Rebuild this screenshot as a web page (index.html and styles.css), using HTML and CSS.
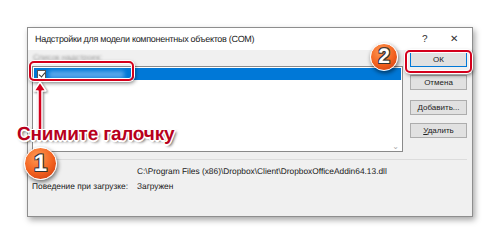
FILE: index.html
```html
<!DOCTYPE html>
<html lang="ru">
<head>
  <meta charset="UTF-8" />
  <title>Надстройки COM</title>
  <link rel="stylesheet" href="styles.css">
</head>
<body>
  <div class="stage">
    <!-- Окно -->
    <div class="dialog">
      <div class="titlebar">
        <span class="title">Надстройки для модели компонентных объектов (COM)</span>
        <span class="help">?</span>
        <span class="close">&#x2715;</span>
      </div>
      <div class="main">
        <div class="list-area">
          <div class="list-label">Список надстроек:</div>
          <div class="listbox">
            <div class="row selected">
              <span class="check"></span>
              <span class="blur-name"></span>
            </div>
            <span class="scroll-arrow">&#x2304;</span>
          </div>
        </div>
        <div class="buttons">
          <button class="btn default">ОК</button>
          <button class="btn">Отмена</button>
          <button class="btn gap"><u>Д</u>обавить...</button>
          <button class="btn"><u>У</u>далить</button>
        </div>
      </div>
      <div class="separator"></div>
      <div class="details">
        <div class="detail-row"><span class="key"></span><span>C:\Program Files (x86)\Dropbox\Client\DropboxOfficeAddin64.13.dll</span></div>
        <div class="detail-row"><span class="key">Поведение при загрузке:</span><span>Загружен</span></div>
      </div>
    </div>

    <!-- Пометки -->
    <div class="frame frame-row"></div>
    <div class="frame frame-ok"></div>
    <svg class="arrow" width="20" height="52" viewBox="0 0 20 52">
      <path d="M10 2 L16 11 L12 11 L12 50 L8 50 L8 11 L4 11 Z" fill="#d4001c" stroke="#fff" stroke-width="1.5" stroke-linejoin="round"/>
    </svg>
    <div class="caption">Снимите галочку</div>
    <div class="badge badge-1">1</div>
    <div class="badge badge-2">2</div>
  </div>
</body>
</html>
```

FILE: styles.css
```css
* { box-sizing: border-box; }
body {
  margin: 0;
  background: #fff;
  font-family: "Liberation Sans", Arial, sans-serif;
  text-rendering: geometricPrecision;
}
.stage {
  position: relative;
  width: 500px;
  height: 243px;
  padding: 27px 0 0 27px;
}
.dialog {
  width: 446px;
  height: 190px;
  background: #f0f0f0;
  border: 1px solid #8e8e8e;
  box-shadow: 2px 3px 6px rgba(0,0,0,0.35);
  display: flex;
  flex-direction: column;
  color: #1a1a1a;
  font-size: 8px;
}
.titlebar {
  height: 22px;
  background: #fff;
  display: flex;
  align-items: center;
  padding: 0 0 0 7px;
}
.title {
  flex: 1;
  font-size: 9px;
  letter-spacing: -0.3px;
  color: #222;
}
.help {
  width: 28px;
  font-size: 10px;
  color: #333;
}
.close {
  width: 22px;
  font-size: 10px;
  color: #333;
}
.main {
  display: grid;
  grid-template-columns: 1fr 57px;
  gap: 7px;
  padding: 2px 5px 0 4px;
}
.list-label {
  height: 14px;
  line-height: 12px;
  color: #999;
  filter: blur(1px);
  font-size: 8px;
  padding-left: 1px;
}
.listbox {
  position: relative;
  height: 86px;
  background: #fff;
  border: 1px solid #8a8a8a;
  padding: 1px;
}
.row {
  height: 12px;
  display: flex;
  align-items: center;
  padding-left: 3px;
}
.row.selected { background: #0078d7; }
.check {
  width: 9px;
  height: 9px;
  background: #fff;
  border: 1px solid #555;
  position: relative;
}
.check::after {
  content: "";
  position: absolute;
  left: 2px;
  top: 0;
  width: 3px;
  height: 5px;
  border: solid #333;
  border-width: 0 1px 1px 0;
  transform: rotate(40deg);
}
.blur-name {
  margin-left: 3px;
  width: 75px;
  height: 7px;
  background: #5aa8ea;
  filter: blur(2px);
}
.scroll-arrow {
  position: absolute;
  right: 3px;
  bottom: 0;
  font-size: 8px;
  color: #aaa;
}
.buttons {
  display: flex;
  flex-direction: column;
  gap: 8px;
}
.btn {
  height: 15px;
  padding: 0;
  background: #e1e1e1;
  border: 1px solid #adadad;
  font-family: "Liberation Sans", Arial, sans-serif;
  font-size: 8px;
  color: #222;
}
.btn.default { border-color: #0078d7; }
.btn.gap { margin-top: 2px; }
.btn u { text-decoration: underline; }
.separator {
  margin: 7px 5px 0 5px;
  border-top: 1px solid #dcdcdc;
}
.details {
  padding: 3px 4px 0 4px;
  font-size: 8.35px;
}
.detail-row {
  display: flex;
  height: 15px;
  align-items: center;
}
.key {
  width: 105px;
}

/* Пометки */
.frame {
  position: absolute;
  border: 2px solid #d4001c;
  border-radius: 5px;
  box-shadow: 0 0 0 1px #fff, 1px 2px 4px rgba(0,0,0,0.55), inset 0 0 0 1px #fff;
}
.frame-row {
  left: 29px;
  top: 61px;
  width: 105px;
  height: 20px;
}
.frame-ok {
  left: 405px;
  top: 50px;
  width: 67px;
  height: 23px;
}
.arrow {
  position: absolute;
  left: 30px;
  top: 80px;
  filter: drop-shadow(1px 1px 1px rgba(0,0,0,0.5));
}
.caption {
  position: absolute;
  left: 17px;
  top: 124px;
  font-size: 19px;
  font-weight: bold;
  color: #b8001c;
  letter-spacing: -0.2px;
  text-shadow:
    -1px -1px 0 #fff, 1px -1px 0 #fff, -1px 1px 0 #fff, 1px 1px 0 #fff,
    0 -1.5px 0 #fff, 0 1.5px 0 #fff, -1.5px 0 0 #fff, 1.5px 0 0 #fff,
    2px 2px 3px rgba(0,0,0,0.7);
}
.badge {
  position: absolute;
  border-radius: 50%;
  background: radial-gradient(circle at 40% 30%, #ff9a55 0%, #f2611f 55%, #c7350e 100%);
  border: 1.5px solid #fff;
  box-shadow: 1px 2px 4px rgba(0,0,0,0.55);
  color: #fff;
  font-weight: bold;
  display: flex;
  align-items: center;
  justify-content: center;
  text-shadow:
    -1px -1px 0 #333, 1px -1px 0 #333, -1px 1px 0 #333, 1px 1px 0 #333;
}
.badge-1 {
  left: 24px;
  top: 147px;
  width: 33px;
  height: 33px;
  font-size: 24px;
}
.badge-2 {
  left: 370px;
  top: 43px;
  width: 28px;
  height: 28px;
  font-size: 21px;
}
```
